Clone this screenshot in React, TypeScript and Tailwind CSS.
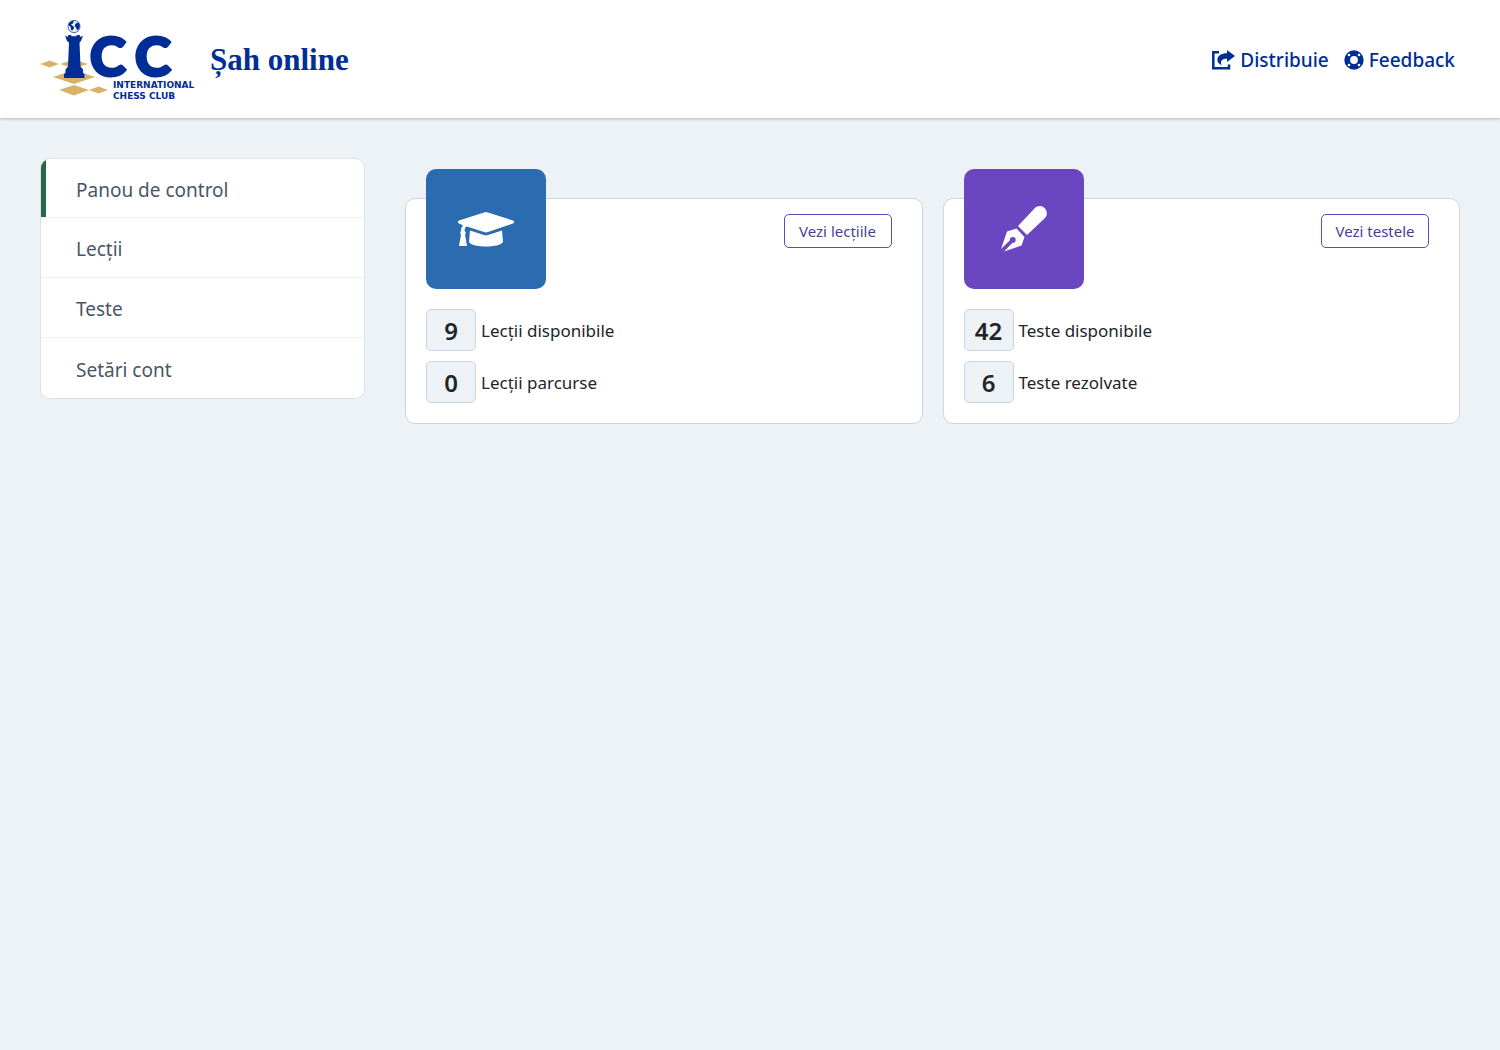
import React from "react";

const navItems = ["Panou de control", "Lecții", "Teste", "Setări cont"];

function Logo() {
  return (
    <svg width="160" height="80" viewBox="0 0 160 80" role="img" aria-label="ICC International Chess Club" className="shrink-0 overflow-visible">
      <g fill="#d7b36a">
        <path d="M0 44 9.500 40.500 19 44 9.500 47.500z" />
        <path d="M20 44 34 39.500 48 44 34 48.500z" />
        <path d="M13 57 34 50 55 57 34 64z" />
        <path d="M19 70 34 65 49 70 34 75.500z" />
        <path d="M49 70 58.500 66.500 68 70 58.500 73.500z" />
      </g>
      <g fill="#002d96">
        <path d="M25 15.500l2.500 1.500 1-2h2.500l.7 1.200h4.600l.7-1.200h2.500l1 2 2.500-1.500-2 5.500-1.500 1.500 1 24 2.500 3v3l1.500 2v3.500H24V54.500l1.500-2v-3l2.500-3 1-24-2-1.500z" />
        <circle cx="34" cy="6.500" r="6" fill="#fff" stroke="#002d96" strokeWidth=".8" />
        <path d="M29 3l3-2 2 .5-1 2-2 1 2 1.500 1.500 1.500-2 3-1.500-.5-.5-3-2-2zM35.500 3.500l3-1 1.500 3-1 3-2 2-1-3-1.500-1.500z" />
        <g fontFamily="Lato, sans-serif" fontSize="54" fontWeight="900" stroke="#002d96" strokeWidth="3">
          <text x="50" y="56">C</text>
          <text x="95" y="56">C</text>
        </g>
        <text fontSize="9" fontFamily="'DejaVu Sans', sans-serif" fontWeight="700">
          <tspan x="73" y="68">INTERNATIONAL</tspan>
          <tspan x="73" y="79">CHESS CLUB</tspan>
        </text>
      </g>
    </svg>
  );
}

function ShareIcon() {
  return (
    <svg width="23" height="20" viewBox="0 0 23 20" aria-hidden="true">
      <path d="M7 2.200H1.300v16H17V14.500" fill="none" stroke="currentColor" strokeWidth="2.500" />
      <path d="M15 0l8 6-8 6V8.800c-5-.3-7 2-5.500 6.200C3 12.500 4 3 15 3.200z" fill="currentColor" />
    </svg>
  );
}

function RingIcon() {
  return (
    <svg width="20" height="20" viewBox="0 0 20 20" aria-hidden="true">
      <circle cx="10" cy="10" r="6.800" fill="none" stroke="currentColor" strokeWidth="5.800" />
      <g fill="#fff">
        <circle cx="5" cy="5" r="1.300" />
        <circle cx="15" cy="5" r="1.300" />
        <circle cx="5" cy="15" r="1.300" />
        <circle cx="15" cy="15" r="1.300" />
      </g>
    </svg>
  );
}

function CapIcon() {
  return (
    <svg width="58" height="36" viewBox="0 0 58 36" fill="#fff" aria-hidden="true">
      <path d="M27 1.500q2-.8 4 0l25 8q2.500 1.500 0 3l-25 8.500q-2 .8-4 0L10 15.500c-2 .5-2.500 2.500-2.300 4.500q2 2 .3 3.500L10 35H2l2-11.500q-1.500-1.800 0-3.500 0-4 2-5.800l-4-1.700q-2.500-1.500 0-3z" />
      <path d="M13 19.500l14 4.500q2 .8 4 0l14-4.500 1 11.500c-3 6-31 6-34 0z" />
    </svg>
  );
}

function PenIcon() {
  return (
    <svg width="46" height="46" viewBox="0 0 46 46" fill="#fff" aria-hidden="true">
      <path d="M17 20 33 3c7-8 17 2 11 9L26 29z" />
      <path d="M15.500 22.500l8 8.500-3 8.500L3 45.500l8.500-8.700a2.900 2.900 0 1 0-2.600-2.600L0 43l6-17.500z" />
    </svg>
  );
}

type CardProps = {
  color: string;
  icon: React.ReactNode;
  action: string;
  stats: [number, string][];
};

function Card({ color, icon, action, stats }: CardProps) {
  return (
    <section className="min-w-0 flex-1 rounded-[10px] border border-[#cbd5e0] bg-white px-5 pb-5">
      <div className="flex items-start justify-between">
        <div className={`-mt-[30px] flex size-[120px] items-center justify-center rounded-[10px] ${color}`}>{icon}</div>
        <button type="button" className="mt-[15px] mr-[10px] h-[34px] w-[108px] rounded-[5px] border border-[#4c51bf] text-[15px] leading-5 text-[#434190]">
          {action}
        </button>
      </div>
      <ul className="mt-5 flex flex-col gap-[10px]">
        {stats.map(([value, label]) => (
          <li key={label} className="flex items-center gap-[5px]">
            <span className="flex h-[42px] w-[50px] items-center justify-center rounded-[5px] border border-[#cbd5e0] bg-[#edf2f7] pt-0.5 text-2xl font-semibold">
              {value}
            </span>
            <span className="pt-0.5 text-[17px] leading-6">{label}</span>
          </li>
        ))}
      </ul>
    </section>
  );
}

export default function App() {
  return (
    <div className="min-h-screen bg-[#edf2f7] font-['Noto_Sans',sans-serif] text-[#212529]">
      <header className="flex items-center justify-between bg-white px-10 pt-5 pb-[18px] text-[#002d96] shadow-[0_1px_3px_rgba(0,0,0,0.25)]">
        <a href="#" className="flex items-center gap-[10px]">
          <Logo />
          <span className="font-['Liberation_Serif',serif] text-[31px] leading-9 font-bold">Șah online</span>
        </a>
        <nav className="flex gap-[15px] pr-[5px] text-[19px] leading-7 font-medium">
          <a href="#" className="flex items-center gap-[5px]"><ShareIcon />Distribuie</a>
          <a href="#" className="flex items-center gap-[5px]"><RingIcon />Feedback</a>
        </nav>
      </header>
      <div className="flex items-start gap-10 p-10">
        <nav className="w-[325px] shrink-0 overflow-hidden rounded-[10px] border border-[#dee2e6] bg-white">
          {navItems.map((item, i) => (
            <a key={item} href="#" className={`flex items-center border-b border-b-[#edf2f7] pt-1 pl-[35px] text-[19px] text-[#4a5568] last:border-b-0 ${i === 0 ? "relative h-[59px] before:absolute before:inset-y-0 before:left-0 before:w-[5px] before:bg-[#276749]" : "h-[60px]"}`}>
              {item}
            </a>
          ))}
        </nav>
        <main className="flex min-w-0 flex-1 gap-5 pt-10">
          <Card color="bg-[#2b6cb0]" icon={<CapIcon />} action="Vezi lecțiile" stats={[[9, "Lecții disponibile"], [0, "Lecții parcurse"]]} />
          <Card color="bg-[#6b46c1]" icon={<PenIcon />} action="Vezi testele" stats={[[42, "Teste disponibile"], [6, "Teste rezolvate"]]} />
        </main>
      </div>
    </div>
  );
}
